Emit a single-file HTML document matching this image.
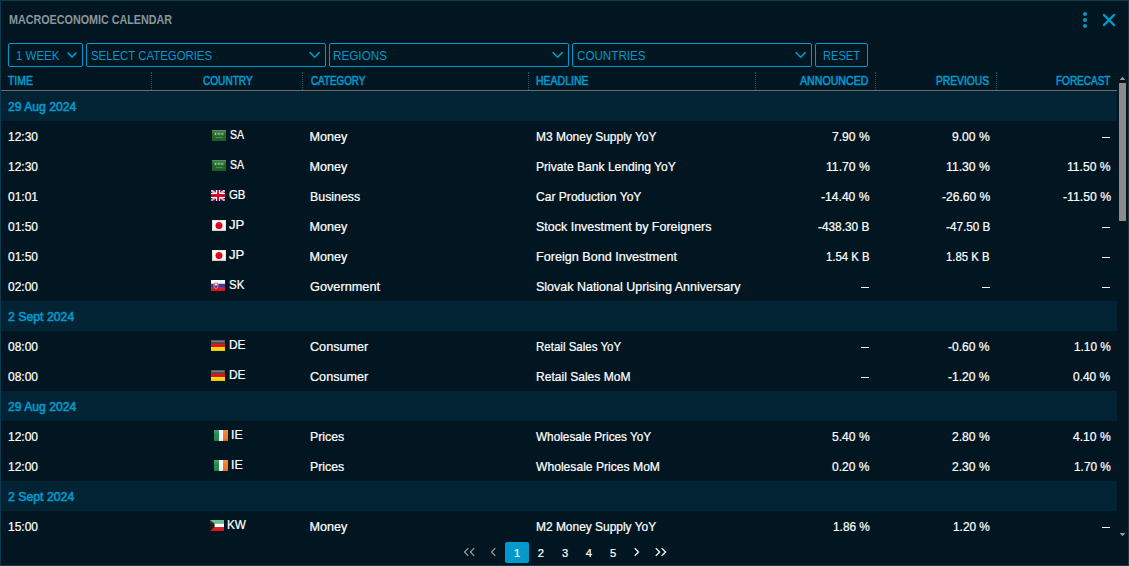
<!DOCTYPE html>
<html><head><meta charset="utf-8"><title>Macroeconomic Calendar</title>
<style>
*{box-sizing:border-box;margin:0;padding:0}
html,body{width:1129px;height:566px;overflow:hidden;background:#011621}
body{font-family:"Liberation Sans",sans-serif;font-size:12.6px;color:#fff;position:relative}
.a{position:absolute;display:block}
.t{position:absolute;display:block;white-space:nowrap;line-height:20px;height:20px;transform-origin:0 0}
.fb{top:43px;height:24px;border:1px solid #0099cc;border-radius:2px}
#bd{left:0;top:0;width:1129px;height:566px;border:1px solid #0c3a4f}
</style></head><body>
<i class="a" style="left:1px;top:91px;width:1116px;height:30px;background:#022333"></i><i class="a" style="left:1px;top:301px;width:1116px;height:30px;background:#022333"></i><i class="a" style="left:1px;top:391px;width:1116px;height:30px;background:#022333"></i><i class="a" style="left:1px;top:481px;width:1116px;height:30px;background:#022333"></i>
<i class="a" style="left:1px;top:90px;width:1116px;height:1px;background:#6c6c6c"></i>
<i class="a" style="left:151px;top:72px;height:18px;border-left:1px dotted #0a5f82"></i><i class="a" style="left:302px;top:72px;height:18px;border-left:1px dotted #0a5f82"></i><i class="a" style="left:528px;top:72px;height:18px;border-left:1px dotted #0a5f82"></i><i class="a" style="left:755px;top:72px;height:18px;border-left:1px dotted #0a5f82"></i><i class="a" style="left:875px;top:72px;height:18px;border-left:1px dotted #0a5f82"></i><i class="a" style="left:996px;top:72px;height:18px;border-left:1px dotted #0a5f82"></i>
<i class="a fb" style="left:8px;width:75px"></i><svg class="a" style="left:66px;top:51px" width="12" height="8" viewBox="0 0 12 8"><path d="M2.200 2.200L6.050 6L9.900 2.200" stroke="#0099cc" stroke-width="1.700" stroke-linecap="round" stroke-linejoin="round" fill="none"/></svg><i class="a fb" style="left:86px;width:240px"></i><svg class="a" style="left:309.3px;top:50.700px" width="11" height="8" viewBox="0 0 11 8"><path d="M1.100 1.600L5.650 6.200L10.200 1.600" stroke="#0099cc" stroke-width="1.500" stroke-linecap="round" fill="none"/></svg><i class="a fb" style="left:329px;width:240px"></i><svg class="a" style="left:552.3px;top:50.700px" width="11" height="8" viewBox="0 0 11 8"><path d="M1.100 1.600L5.650 6.200L10.200 1.600" stroke="#0099cc" stroke-width="1.500" stroke-linecap="round" fill="none"/></svg><i class="a fb" style="left:572px;width:240px"></i><svg class="a" style="left:795.3px;top:50.700px" width="11" height="8" viewBox="0 0 11 8"><path d="M1.100 1.600L5.650 6.200L10.200 1.600" stroke="#0099cc" stroke-width="1.500" stroke-linecap="round" fill="none"/></svg><i class="a fb" style="left:815px;width:53px"></i>
<svg class="a" style="left:1082px;top:11px" width="6" height="18" viewBox="0 0 6 18"><circle cx="3" cy="3" r="2" fill="#0099cc"/><circle cx="3" cy="9" r="2" fill="#0099cc"/><circle cx="3" cy="15" r="2" fill="#0099cc"/></svg>
<svg class="a" style="left:1102px;top:13px" width="14" height="14" viewBox="0 0 14 14"><path d="M1.900 1.900L12.100 12.100M12.100 1.900L1.900 12.100" stroke="#0099cc" stroke-width="2.200" stroke-linecap="round" fill="none"/></svg>
<svg width="0" height="0" style="position:absolute"><defs><linearGradient id="gl" x1="0" y1="0" x2="0" y2="1"><stop offset="0" stop-color="#fff" stop-opacity=".18"/><stop offset=".5" stop-color="#fff" stop-opacity="0"/><stop offset="1" stop-color="#000" stop-opacity=".12"/></linearGradient></defs></svg>
<svg class="a" style="left:212px;top:130px" width="14" height="11" viewBox="0 0 14 11"><rect width="14" height="11" fill="#1d6423"/><rect width="14" height="1" fill="#3f8246" opacity=".7"/><rect x="2" y="2.400" width="10" height="3" fill="#5f9a66" opacity=".55"/><rect x="3" y="3" width="1" height="2" fill="#cfe6d2" opacity=".6"/><rect x="6" y="3" width="1.500" height="1.600" fill="#cfe6d2" opacity=".5"/><rect x="9.500" y="3" width="1" height="2" fill="#cfe6d2" opacity=".6"/><rect x="4" y="7" width="6.500" height="1" fill="#5f9a66" opacity=".7"/><rect width="14" height="11" fill="url(#gl)"/></svg><svg class="a" style="left:212px;top:160px" width="14" height="11" viewBox="0 0 14 11"><rect width="14" height="11" fill="#1d6423"/><rect width="14" height="1" fill="#3f8246" opacity=".7"/><rect x="2" y="2.400" width="10" height="3" fill="#5f9a66" opacity=".55"/><rect x="3" y="3" width="1" height="2" fill="#cfe6d2" opacity=".6"/><rect x="6" y="3" width="1.500" height="1.600" fill="#cfe6d2" opacity=".5"/><rect x="9.500" y="3" width="1" height="2" fill="#cfe6d2" opacity=".6"/><rect x="4" y="7" width="6.500" height="1" fill="#5f9a66" opacity=".7"/><rect width="14" height="11" fill="url(#gl)"/></svg><svg class="a" style="left:211px;top:190px" width="14" height="11" viewBox="0 0 14 11"><rect width="14" height="11" fill="#1c1f78"/><path d="M0 0L14 11M14 0L0 11" stroke="#f4f0f4" stroke-width="1.900"/><path d="M0 0L14 11M14 0L0 11" stroke="#e8505a" stroke-width=".7"/><rect x="5" width="4" height="11" fill="#fff"/><rect y="3" width="14" height="5" fill="#fff"/><rect x="6" width="2" height="11" fill="#e00018"/><rect y="4" width="14" height="3" fill="#e00018"/><rect width="14" height="11" fill="url(#gl)"/></svg><svg class="a" style="left:212px;top:220px" width="14" height="11" viewBox="0 0 14 11"><rect width="14" height="11" fill="#fdfdfb"/><circle cx="7" cy="5.500" r="3.500" fill="#e00012"/><rect x=".5" y=".5" width="13" height="10" fill="none" stroke="#d9d9d4" stroke-width="1" opacity=".7"/><rect width="14" height="11" fill="url(#gl)"/></svg><svg class="a" style="left:212px;top:250px" width="14" height="11" viewBox="0 0 14 11"><rect width="14" height="11" fill="#fdfdfb"/><circle cx="7" cy="5.500" r="3.500" fill="#e00012"/><rect x=".5" y=".5" width="13" height="10" fill="none" stroke="#d9d9d4" stroke-width="1" opacity=".7"/><rect width="14" height="11" fill="url(#gl)"/></svg><svg class="a" style="left:211px;top:280px" width="14" height="11" viewBox="0 0 14 11"><rect width="14" height="11" fill="#fdfdfd"/><rect y="3.700" width="14" height="3.600" fill="#2540b4"/><rect y="7" width="14" height="4" fill="#e41a1f"/><path d="M3 2.700h4v3.600c0 1.300-1 2-2 2.500c-1-.5-2-1.200-2-2.500z" fill="#e2343a" stroke="#f4dada" stroke-width=".5"/><rect x="4.500" y="3.300" width="1" height="2.300" fill="#fff"/><rect x="3.800" y="4" width="2.400" height=".9" fill="#fff"/><path d="M3.600 6.300h2.800c0 1-.7 1.600-1.400 2c-.7-.4-1.400-1-1.400-2z" fill="#2a4cc0"/><rect width="14" height="11" fill="url(#gl)"/></svg><svg class="a" style="left:211px;top:340px" width="14" height="11" viewBox="0 0 14 11"><rect width="14" height="11" fill="#3c3c3c"/><rect x="1" y="1" width="12" height="1" fill="#777" opacity=".7"/><rect y="3.900" width="14" height="3.200" fill="#e80c16"/><rect y="7" width="14" height="4" fill="#fde10a"/><rect width="14" height="11" fill="url(#gl)"/></svg><svg class="a" style="left:211px;top:370px" width="14" height="11" viewBox="0 0 14 11"><rect width="14" height="11" fill="#3c3c3c"/><rect x="1" y="1" width="12" height="1" fill="#777" opacity=".7"/><rect y="3.900" width="14" height="3.200" fill="#e80c16"/><rect y="7" width="14" height="4" fill="#fde10a"/><rect width="14" height="11" fill="url(#gl)"/></svg><svg class="a" style="left:214px;top:430px" width="14" height="11" viewBox="0 0 14 11"><rect width="14" height="11" fill="#fdfdf8"/><rect width="5" height="11" fill="#1b8a4c"/><rect x="9" width="5" height="11" fill="#f4781c"/><rect width="14" height="11" fill="url(#gl)"/></svg><svg class="a" style="left:214px;top:460px" width="14" height="11" viewBox="0 0 14 11"><rect width="14" height="11" fill="#fdfdf8"/><rect width="5" height="11" fill="#1b8a4c"/><rect x="9" width="5" height="11" fill="#f4781c"/><rect width="14" height="11" fill="url(#gl)"/></svg><svg class="a" style="left:210px;top:520px" width="14" height="11" viewBox="0 0 14 11"><rect width="14" height="11" fill="#fdfdfd"/><rect width="14" height="3.800" fill="#55b486"/><rect y="7" width="14" height="4" fill="#e8181d"/><path d="M0 0L4.600 3.800V7L0 11z" fill="#1a1414"/><rect width="14" height="11" fill="url(#gl)"/></svg>
<i class="a" style="left:1102.3px;top:137px;width:8px;height:1px;background:#f2f2f2"></i><i class="a" style="left:1102.3px;top:227px;width:8px;height:1px;background:#f2f2f2"></i><i class="a" style="left:1102.3px;top:257px;width:8px;height:1px;background:#f2f2f2"></i><i class="a" style="left:861.2px;top:287px;width:8px;height:1px;background:#f2f2f2"></i><i class="a" style="left:981.7px;top:287px;width:8px;height:1px;background:#f2f2f2"></i><i class="a" style="left:1102.3px;top:287px;width:8px;height:1px;background:#f2f2f2"></i><i class="a" style="left:861.2px;top:347px;width:8px;height:1px;background:#f2f2f2"></i><i class="a" style="left:861.2px;top:377px;width:8px;height:1px;background:#f2f2f2"></i><i class="a" style="left:1102.3px;top:527px;width:8px;height:1px;background:#f2f2f2"></i>
<i class="a" style="left:1117px;top:70px;width:11px;height:471px;background:#011621"></i>
<svg class="a" style="left:1119px;top:76px" width="7" height="4" viewBox="0 0 7 4"><path d="M.6 4L3.500 .8L6.400 4z" fill="#9a9a9a"/></svg>
<i class="a" style="left:1119px;top:83px;width:7px;height:138px;background:#8c8c8c"></i>
<svg class="a" style="left:1119px;top:533px" width="7" height="4" viewBox="0 0 7 4"><path d="M.6 0L3.500 3.200L6.400 0z" fill="#9a9a9a"/></svg>
<i class="a" style="left:505px;top:542px;width:24px;height:21px;background:#0099cc;border-radius:2px"></i>
<svg class="a" style="left:463px;top:547px" width="13" height="10" viewBox="0 0 13 10"><path d="M5.300 1.100L1.500 5L5.300 8.900M11.200 1.100L7.400 5L11.200 8.900" stroke="#9a9a9a" stroke-width="1.300" fill="none"/></svg>
<svg class="a" style="left:490px;top:547px" width="7" height="10" viewBox="0 0 7 10"><path d="M5.300 1.100L1.500 5L5.300 8.900" stroke="#9a9a9a" stroke-width="1.300" fill="none"/></svg>
<svg class="a" style="left:633px;top:547px" width="7" height="10" viewBox="0 0 7 10"><path d="M1.700 1.100L5.500 5L1.700 8.900" stroke="#fff" stroke-width="1.300" fill="none"/></svg>
<svg class="a" style="left:654px;top:547px" width="13" height="10" viewBox="0 0 13 10"><path d="M1.800 1.100L5.600 5L1.800 8.900M7.700 1.100L11.500 5L7.700 8.900" stroke="#fff" stroke-width="1.300" fill="none"/></svg>
<span class="t" style="left:8.60px;top:9.84px;font-size:12.0px;color:#8b959b;font-weight:bold;transform:scaleX(0.8962);">MACROECONOMIC CALENDAR</span><span class="t" style="left:16.30px;top:45.63px;font-size:12.6px;color:#0099cc;transform:scaleX(0.9131);">1 WEEK</span><span class="t" style="left:90.90px;top:45.63px;font-size:12.6px;color:#0099cc;transform:scaleX(0.9041);">SELECT CATEGORIES</span><span class="t" style="left:333.37px;top:45.63px;font-size:12.6px;color:#0099cc;transform:scaleX(0.9298);">REGIONS</span><span class="t" style="left:577.20px;top:45.63px;font-size:12.6px;color:#0099cc;transform:scaleX(0.9245);">COUNTRIES</span><span class="t" style="left:822.62px;top:45.63px;font-size:12.6px;color:#0099cc;transform:scaleX(0.8815);">RESET</span><span class="t" style="left:8.20px;top:70.50px;font-size:13.0px;color:#0099cc;-webkit-text-stroke:0.6px #0099cc;transform:scaleX(0.7998);">TIME</span><span class="t" style="left:202.90px;top:70.50px;font-size:13.0px;color:#0099cc;-webkit-text-stroke:0.6px #0099cc;transform:scaleX(0.7752);">COUNTRY</span><span class="t" style="left:311.00px;top:70.50px;font-size:13.0px;color:#0099cc;-webkit-text-stroke:0.6px #0099cc;transform:scaleX(0.7575);">CATEGORY</span><span class="t" style="left:536.19px;top:70.50px;font-size:13.0px;color:#0099cc;-webkit-text-stroke:0.6px #0099cc;transform:scaleX(0.8066);">HEADLINE</span><span class="t" style="left:800.30px;top:70.50px;font-size:13.0px;color:#0099cc;-webkit-text-stroke:0.6px #0099cc;transform:scaleX(0.8166);">ANNOUNCED</span><span class="t" style="left:935.91px;top:70.50px;font-size:13.0px;color:#0099cc;-webkit-text-stroke:0.6px #0099cc;transform:scaleX(0.7893);">PREVIOUS</span><span class="t" style="left:1055.63px;top:70.50px;font-size:13.0px;color:#0099cc;-webkit-text-stroke:0.6px #0099cc;transform:scaleX(0.7689);">FORECAST</span><span class="t" style="left:8.00px;top:96.63px;font-size:12.6px;color:#0099cc;-webkit-text-stroke:0.6px #0099cc;transform:scaleX(0.9660);">29 Aug 2024</span><span class="t" style="left:8.40px;top:126.63px;font-size:12.6px;color:#fff;-webkit-text-stroke:.22px #fff;transform:scaleX(0.9500);">12:30</span><span class="t" style="left:229.80px;top:124.63px;font-size:12.6px;color:#fff;-webkit-text-stroke:.22px #fff;transform:scaleX(0.8391);">SA</span><span class="t" style="left:309.50px;top:126.63px;font-size:12.6px;color:#fff;-webkit-text-stroke:.22px #fff;">Money</span><span class="t" style="left:535.75px;top:126.63px;font-size:12.6px;color:#fff;-webkit-text-stroke:.22px #fff;transform:scaleX(0.9506);">M3 Money Supply YoY</span><span class="t" style="left:831.70px;top:126.63px;font-size:12.6px;color:#fff;-webkit-text-stroke:.22px #fff;transform:scaleX(0.9613);">7.90 %</span><span class="t" style="left:952.20px;top:126.63px;font-size:12.6px;color:#fff;-webkit-text-stroke:.22px #fff;transform:scaleX(0.9613);">9.00 %</span><span class="t" style="left:8.40px;top:156.63px;font-size:12.6px;color:#fff;-webkit-text-stroke:.22px #fff;transform:scaleX(0.9500);">12:30</span><span class="t" style="left:229.80px;top:154.63px;font-size:12.6px;color:#fff;-webkit-text-stroke:.22px #fff;transform:scaleX(0.8391);">SA</span><span class="t" style="left:309.50px;top:156.63px;font-size:12.6px;color:#fff;-webkit-text-stroke:.22px #fff;">Money</span><span class="t" style="left:535.74px;top:156.63px;font-size:12.6px;color:#fff;-webkit-text-stroke:.22px #fff;transform:scaleX(0.9597);">Private Bank Lending YoY</span><span class="t" style="left:825.60px;top:156.63px;font-size:12.6px;color:#fff;-webkit-text-stroke:.22px #fff;transform:scaleX(0.9672);">11.70 %</span><span class="t" style="left:946.00px;top:156.63px;font-size:12.6px;color:#fff;-webkit-text-stroke:.22px #fff;transform:scaleX(0.9694);">11.30 %</span><span class="t" style="left:1067.00px;top:156.63px;font-size:12.6px;color:#fff;-webkit-text-stroke:.22px #fff;transform:scaleX(0.9605);">11.50 %</span><span class="t" style="left:8.40px;top:186.63px;font-size:12.6px;color:#fff;-webkit-text-stroke:.22px #fff;transform:scaleX(0.9500);">01:01</span><span class="t" style="left:228.90px;top:184.63px;font-size:12.6px;color:#fff;-webkit-text-stroke:.22px #fff;transform:scaleX(0.9047);">GB</span><span class="t" style="left:309.82px;top:186.63px;font-size:12.6px;color:#fff;-webkit-text-stroke:.22px #fff;transform:scaleX(0.9819);">Business</span><span class="t" style="left:536.30px;top:186.63px;font-size:12.6px;color:#fff;-webkit-text-stroke:.22px #fff;transform:scaleX(0.9590);">Car Production YoY</span><span class="t" style="left:820.90px;top:186.63px;font-size:12.6px;color:#fff;-webkit-text-stroke:.22px #fff;transform:scaleX(0.9620);">-14.40 %</span><span class="t" style="left:941.70px;top:186.63px;font-size:12.6px;color:#fff;-webkit-text-stroke:.22px #fff;transform:scaleX(0.9560);">-26.60 %</span><span class="t" style="left:1062.50px;top:186.63px;font-size:12.6px;color:#fff;-webkit-text-stroke:.22px #fff;transform:scaleX(0.9701);">-11.50 %</span><span class="t" style="left:8.40px;top:216.63px;font-size:12.6px;color:#fff;-webkit-text-stroke:.22px #fff;transform:scaleX(0.9500);">01:50</span><span class="t" style="left:229.30px;top:214.63px;font-size:12.6px;color:#fff;-webkit-text-stroke:.22px #fff;transform:scaleX(1.0422);">JP</span><span class="t" style="left:309.50px;top:216.63px;font-size:12.6px;color:#fff;-webkit-text-stroke:.22px #fff;">Money</span><span class="t" style="left:536.40px;top:216.63px;font-size:12.6px;color:#fff;-webkit-text-stroke:.22px #fff;transform:scaleX(0.9910);">Stock Investment by Foreigners</span><span class="t" style="left:818.20px;top:216.63px;font-size:12.6px;color:#fff;-webkit-text-stroke:.22px #fff;transform:scaleX(0.9408);">-438.30 B</span><span class="t" style="left:945.90px;top:216.63px;font-size:12.6px;color:#fff;-webkit-text-stroke:.22px #fff;transform:scaleX(0.9278);">-47.50 B</span><span class="t" style="left:8.40px;top:246.63px;font-size:12.6px;color:#fff;-webkit-text-stroke:.22px #fff;transform:scaleX(0.9500);">01:50</span><span class="t" style="left:229.30px;top:244.63px;font-size:12.6px;color:#fff;-webkit-text-stroke:.22px #fff;transform:scaleX(1.0422);">JP</span><span class="t" style="left:309.50px;top:246.63px;font-size:12.6px;color:#fff;-webkit-text-stroke:.22px #fff;">Money</span><span class="t" style="left:536.00px;top:246.63px;font-size:12.6px;color:#fff;-webkit-text-stroke:.22px #fff;transform:scaleX(1.0014);">Foreign Bond Investment</span><span class="t" style="left:825.90px;top:246.63px;font-size:12.6px;color:#fff;-webkit-text-stroke:.22px #fff;transform:scaleX(0.9038);">1.54 K B</span><span class="t" style="left:946.40px;top:246.63px;font-size:12.6px;color:#fff;-webkit-text-stroke:.22px #fff;transform:scaleX(0.9038);">1.85 K B</span><span class="t" style="left:8.40px;top:276.63px;font-size:12.6px;color:#fff;-webkit-text-stroke:.22px #fff;transform:scaleX(0.9500);">02:00</span><span class="t" style="left:229.10px;top:274.63px;font-size:12.6px;color:#fff;-webkit-text-stroke:.22px #fff;transform:scaleX(0.9138);">SK</span><span class="t" style="left:310.30px;top:276.63px;font-size:12.6px;color:#fff;-webkit-text-stroke:.22px #fff;transform:scaleX(1.0101);">Government</span><span class="t" style="left:536.40px;top:276.63px;font-size:12.6px;color:#fff;-webkit-text-stroke:.22px #fff;transform:scaleX(0.9909);">Slovak National Uprising Anniversary</span><span class="t" style="left:8.00px;top:306.63px;font-size:12.6px;color:#0099cc;-webkit-text-stroke:0.6px #0099cc;transform:scaleX(0.9747);">2 Sept 2024</span><span class="t" style="left:8.40px;top:336.63px;font-size:12.6px;color:#fff;-webkit-text-stroke:.22px #fff;transform:scaleX(0.9500);">08:00</span><span class="t" style="left:228.76px;top:334.63px;font-size:12.6px;color:#fff;-webkit-text-stroke:.22px #fff;transform:scaleX(0.9444);">DE</span><span class="t" style="left:310.30px;top:336.63px;font-size:12.6px;color:#fff;-webkit-text-stroke:.22px #fff;transform:scaleX(1.0018);">Consumer</span><span class="t" style="left:535.79px;top:336.63px;font-size:12.6px;color:#fff;-webkit-text-stroke:.22px #fff;transform:scaleX(0.9145);">Retail Sales YoY</span><span class="t" style="left:948.30px;top:336.63px;font-size:12.6px;color:#fff;-webkit-text-stroke:.22px #fff;transform:scaleX(0.9582);">-0.60 %</span><span class="t" style="left:1073.80px;top:336.63px;font-size:12.6px;color:#fff;-webkit-text-stroke:.22px #fff;transform:scaleX(0.9357);">1.10 %</span><span class="t" style="left:8.40px;top:366.63px;font-size:12.6px;color:#fff;-webkit-text-stroke:.22px #fff;transform:scaleX(0.9500);">08:00</span><span class="t" style="left:228.76px;top:364.63px;font-size:12.6px;color:#fff;-webkit-text-stroke:.22px #fff;transform:scaleX(0.9444);">DE</span><span class="t" style="left:310.30px;top:366.63px;font-size:12.6px;color:#fff;-webkit-text-stroke:.22px #fff;transform:scaleX(1.0018);">Consumer</span><span class="t" style="left:535.74px;top:366.63px;font-size:12.6px;color:#fff;-webkit-text-stroke:.22px #fff;transform:scaleX(0.9569);">Retail Sales MoM</span><span class="t" style="left:948.30px;top:366.63px;font-size:12.6px;color:#fff;-webkit-text-stroke:.22px #fff;transform:scaleX(0.9582);">-1.20 %</span><span class="t" style="left:1073.30px;top:366.63px;font-size:12.6px;color:#fff;-webkit-text-stroke:.22px #fff;transform:scaleX(0.9485);">0.40 %</span><span class="t" style="left:8.00px;top:396.63px;font-size:12.6px;color:#0099cc;-webkit-text-stroke:0.6px #0099cc;transform:scaleX(0.9660);">29 Aug 2024</span><span class="t" style="left:8.40px;top:426.63px;font-size:12.6px;color:#fff;-webkit-text-stroke:.22px #fff;transform:scaleX(0.9500);">12:00</span><span class="t" style="left:230.92px;top:424.63px;font-size:12.6px;color:#fff;-webkit-text-stroke:.22px #fff;transform:scaleX(0.9811);">IE</span><span class="t" style="left:309.82px;top:426.63px;font-size:12.6px;color:#fff;-webkit-text-stroke:.22px #fff;transform:scaleX(0.9794);">Prices</span><span class="t" style="left:536.20px;top:426.63px;font-size:12.6px;color:#fff;-webkit-text-stroke:.22px #fff;transform:scaleX(0.9352);">Wholesale Prices YoY</span><span class="t" style="left:831.70px;top:426.63px;font-size:12.6px;color:#fff;-webkit-text-stroke:.22px #fff;transform:scaleX(0.9613);">5.40 %</span><span class="t" style="left:952.20px;top:426.63px;font-size:12.6px;color:#fff;-webkit-text-stroke:.22px #fff;transform:scaleX(0.9613);">2.80 %</span><span class="t" style="left:1072.80px;top:426.63px;font-size:12.6px;color:#fff;-webkit-text-stroke:.22px #fff;transform:scaleX(0.9613);">4.10 %</span><span class="t" style="left:8.40px;top:456.63px;font-size:12.6px;color:#fff;-webkit-text-stroke:.22px #fff;transform:scaleX(0.9500);">12:00</span><span class="t" style="left:230.92px;top:454.63px;font-size:12.6px;color:#fff;-webkit-text-stroke:.22px #fff;transform:scaleX(0.9811);">IE</span><span class="t" style="left:309.82px;top:456.63px;font-size:12.6px;color:#fff;-webkit-text-stroke:.22px #fff;transform:scaleX(0.9794);">Prices</span><span class="t" style="left:536.20px;top:456.63px;font-size:12.6px;color:#fff;-webkit-text-stroke:.22px #fff;transform:scaleX(0.9627);">Wholesale Prices MoM</span><span class="t" style="left:832.00px;top:456.63px;font-size:12.6px;color:#fff;-webkit-text-stroke:.22px #fff;transform:scaleX(0.9536);">0.20 %</span><span class="t" style="left:952.20px;top:456.63px;font-size:12.6px;color:#fff;-webkit-text-stroke:.22px #fff;transform:scaleX(0.9613);">2.30 %</span><span class="t" style="left:1073.60px;top:456.63px;font-size:12.6px;color:#fff;-webkit-text-stroke:.22px #fff;transform:scaleX(0.9408);">1.70 %</span><span class="t" style="left:8.00px;top:486.63px;font-size:12.6px;color:#0099cc;-webkit-text-stroke:0.6px #0099cc;transform:scaleX(0.9747);">2 Sept 2024</span><span class="t" style="left:8.40px;top:516.63px;font-size:12.6px;color:#fff;-webkit-text-stroke:.22px #fff;transform:scaleX(0.9500);">15:00</span><span class="t" style="left:227.07px;top:514.63px;font-size:12.6px;color:#fff;-webkit-text-stroke:.22px #fff;transform:scaleX(0.9330);">KW</span><span class="t" style="left:309.50px;top:516.63px;font-size:12.6px;color:#fff;-webkit-text-stroke:.22px #fff;">Money</span><span class="t" style="left:535.75px;top:516.63px;font-size:12.6px;color:#fff;-webkit-text-stroke:.22px #fff;transform:scaleX(0.9483);">M2 Money Supply YoY</span><span class="t" style="left:832.50px;top:516.63px;font-size:12.6px;color:#fff;-webkit-text-stroke:.22px #fff;transform:scaleX(0.9408);">1.86 %</span><span class="t" style="left:953.00px;top:516.63px;font-size:12.6px;color:#fff;-webkit-text-stroke:.22px #fff;transform:scaleX(0.9408);">1.20 %</span><span class="t" style="left:514.05px;top:543.12px;font-size:11.2px;color:#fff;-webkit-text-stroke:.22px #fff;">1</span><span class="t" style="left:537.65px;top:543.12px;font-size:11.2px;color:#fff;-webkit-text-stroke:.22px #fff;">2</span><span class="t" style="left:562.00px;top:543.12px;font-size:11.2px;color:#fff;-webkit-text-stroke:.22px #fff;">3</span><span class="t" style="left:585.75px;top:543.12px;font-size:11.2px;color:#fff;-webkit-text-stroke:.22px #fff;">4</span><span class="t" style="left:610.00px;top:543.12px;font-size:11.2px;color:#fff;-webkit-text-stroke:.22px #fff;">5</span>
<i class="a" id="bd"></i>
</body></html>
